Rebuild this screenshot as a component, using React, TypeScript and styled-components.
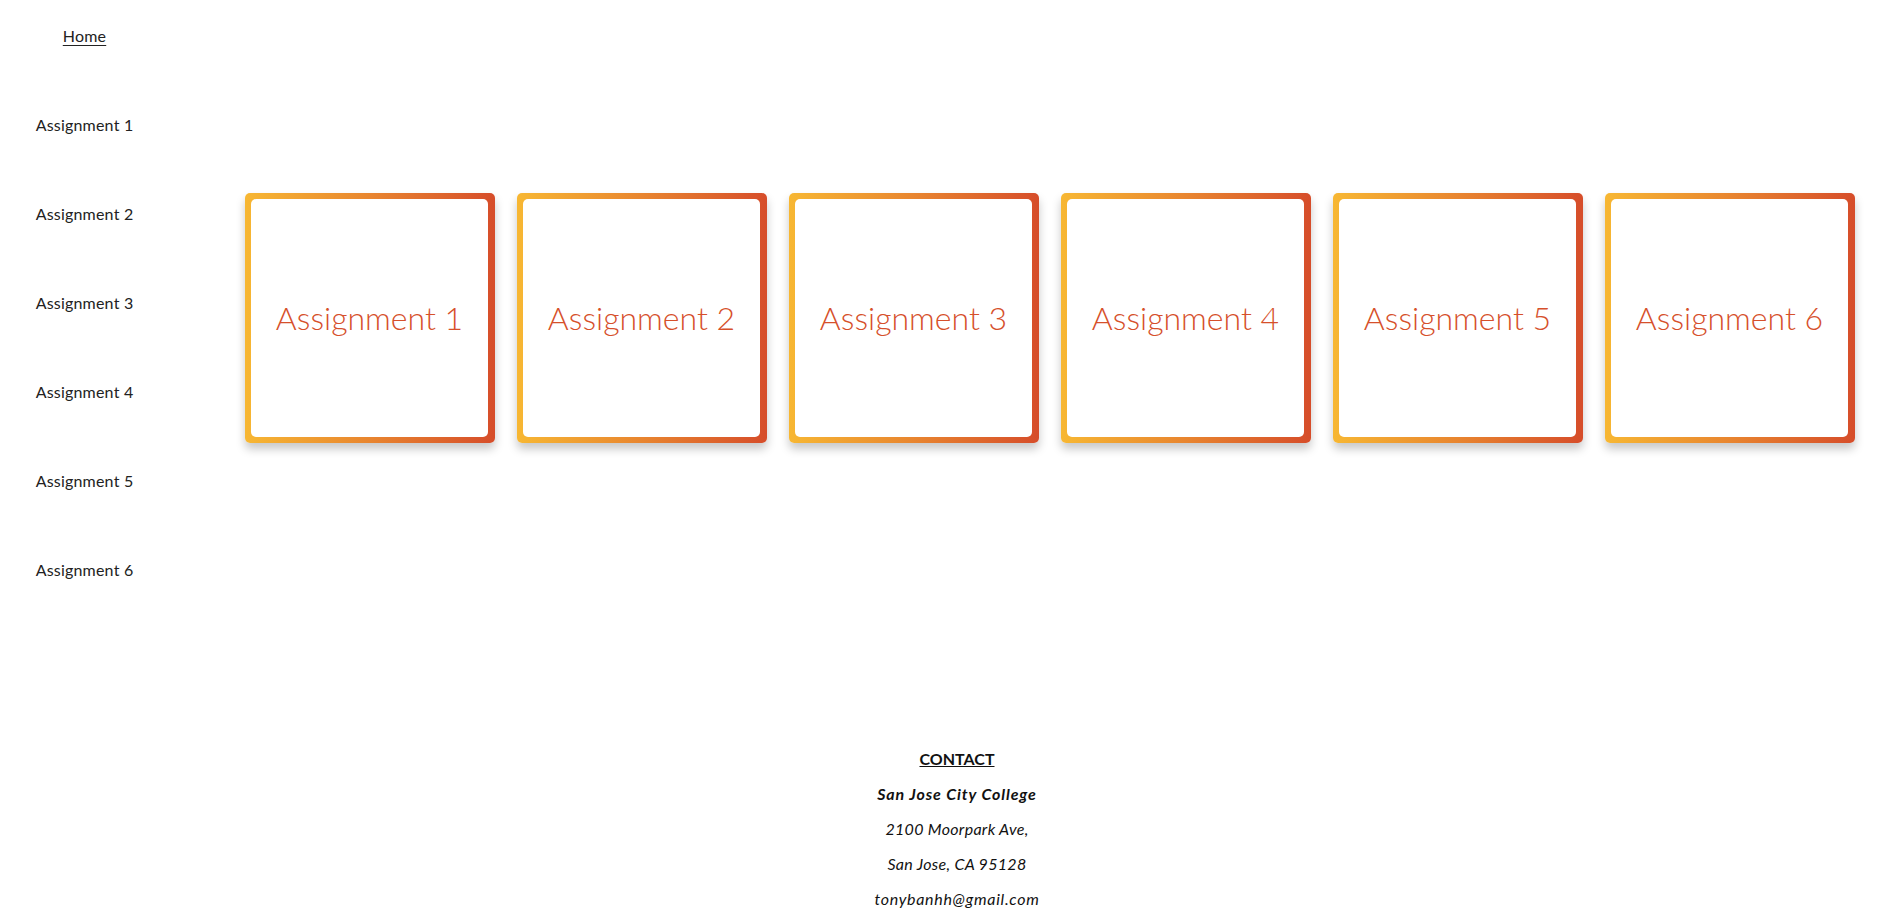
import React from "react";
import styled, { createGlobalStyle } from "styled-components";

const GlobalStyle = createGlobalStyle`
  html, body {
    margin: 0;
    padding: 0;
    background: #ffffff;
    font-family: Lato, "Open Sans", "Liberation Sans", sans-serif;
  }
`;

const Page = styled.div`
  display: flex;
  flex-direction: column;
  min-height: 100vh;
`;

const Top = styled.div`
  display: flex;
  align-items: flex-start;
`;

const Sidebar = styled.nav`
  width: 169px;
  flex: none;
  padding-top: 26px;
`;

const NavList = styled.ul`
  list-style: none;
  margin: 0;
  padding: 0;
  display: flex;
  flex-direction: column;
  gap: 69px;
`;

const NavItem = styled.li`
  text-align: center;
  line-height: 20px;
  font-size: 16px;
  letter-spacing: 0.2px;
`;

const NavLink = styled.a<{ $underline?: boolean }>`
  color: #222222;
  text-decoration: ${(p) => (p.$underline ? "underline" : "none")};
  text-underline-offset: 3px;
`;

const Main = styled.main`
  flex: 1;
  padding: 193px 0 0 76px;
`;

const CardRow = styled.div`
  display: flex;
  gap: 22px;
`;

const Card = styled.div`
  width: 250px;
  height: 250px;
  box-sizing: border-box;
  padding: 6px 7px 6px 6px;
  border-radius: 5px;
  background: linear-gradient(to right, #f7b733, #e8852f 50%, #d64d2a);
  box-shadow: 0 6px 10px rgba(0, 0, 0, 0.22);
  flex: none;
`;

const CardInner = styled.div`
  height: 100%;
  background: #ffffff;
  border-radius: 5px;
  display: flex;
  align-items: center;
  justify-content: center;
  color: #d6502b;
  font-size: 32px;
  font-weight: 300;
  padding-bottom: 2px;
  box-sizing: border-box;
`;

const Footer = styled.footer`
  padding: 153px 0 0 18px;
  text-align: center;
  color: #111111;
  font-size: 16px;
`;

const Line = styled.p<{ $bold?: boolean; $italic?: boolean; $underline?: boolean; $spacing?: number }>`
  margin: 16px 0;
  line-height: 19px;
  font-weight: ${(p) => (p.$bold ? 700 : 400)};
  font-style: ${(p) => (p.$italic ? "italic" : "normal")};
  text-decoration: ${(p) => (p.$underline ? "underline" : "none")};
  letter-spacing: ${(p) => p.$spacing ?? 0}px;
`;

const items = [1, 2, 3, 4, 5, 6];

export default function App() {
  return (
    <Page>
      <GlobalStyle />
      <Top>
        <Sidebar>
          <NavList>
            <NavItem>
              <NavLink href="#" $underline>
                Home
              </NavLink>
            </NavItem>
            {items.map((n) => (
              <NavItem key={n}>
                <NavLink href="#">Assignment {n}</NavLink>
              </NavItem>
            ))}
          </NavList>
        </Sidebar>
        <Main>
          <CardRow>
            {items.map((n) => (
              <Card key={n}>
                <CardInner>Assignment {n}</CardInner>
              </Card>
            ))}
          </CardRow>
        </Main>
      </Top>
      <Footer>
        <Line $bold $underline>
          CONTACT
        </Line>
        <Line $bold $italic $spacing={0.9}>
          San Jose City College
        </Line>
        <Line $italic $spacing={0.3}>2100 Moorpark Ave,</Line>
        <Line $italic $spacing={0.3}>San Jose, CA 95128</Line>
        <Line $italic $spacing={0.7}>tonybanhh@gmail.com</Line>
      </Footer>
    </Page>
  );
}
